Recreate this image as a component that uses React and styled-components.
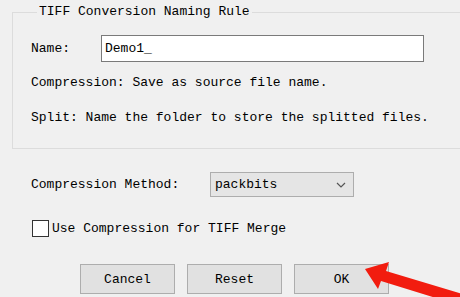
import React from 'react'
import styled, {createGlobalStyle} from 'styled-components'

const Global = createGlobalStyle`
  html, body {
    margin: 0;
    padding: 0;
    background: #f0f0f0;
  }
  body {
    width: 460px;
    height: 297px;
    overflow: hidden;
    font-family: "Liberation Mono", "DejaVu Sans Mono", monospace;
    font-size: 13px;
    color: #000;
  }
`

const Dialog = styled.div`
  position: relative;
  width: 460px;
  height: 297px;
  overflow: hidden;
`

const Group = styled.fieldset`
  margin: 4px 0 0 12px;
  width: 470px;
  padding: 15px 0 22px 18px;
  border: 1px solid #dcdcdc;
  box-sizing: border-box;
`

const Legend = styled.legend`
  margin-left: 6px;
  padding: 0 2px;
  line-height: 16px;
`

const Row = styled.div`
  display: flex;
  align-items: center;
  gap: ${(props) => props.gap || 0}px;
  margin-top: ${(props) => props.top || 0}px;
  padding-left: ${(props) => props.left || 0}px;
`

const Label = styled.span`
  width: ${(props) => props.width}px;
  flex: none;
  line-height: 16px;
`

const Note = styled.div`
  line-height: 16px;
  margin-top: ${(props) => props.top}px;
`

const TextInput = styled.input`
  width: 323px;
  height: 27px;
  box-sizing: border-box;
  border: 1px solid #7a7a7a;
  background: #fff;
  padding: 0 3px;
  font: inherit;
  color: #000;
  outline: none;
`

const Select = styled.div`
  width: 144px;
  height: 25px;
  box-sizing: border-box;
  border: 1px solid #adadad;
  background: #e5e5e5;
  display: flex;
  align-items: center;
  justify-content: space-between;
  padding: 0 7px 0 4px;
`

const Check = styled.span`
  width: 17px;
  height: 17px;
  box-sizing: border-box;
  border: 1px solid #333;
  background: #fff;
  flex: none;
`

const Buttons = styled.div`
  display: flex;
  gap: 12px;
  margin-top: 27px;
  padding-left: 80px;
`

const Button = styled.button`
  width: 95px;
  height: 30px;
  box-sizing: border-box;
  border: 1px solid #adadad;
  background: #e1e1e1;
  font: inherit;
  color: #000;
  padding: 0;
`

const Arrow = styled.svg`
  position: absolute;
  left: 0;
  top: 0;
  pointer-events: none;
`

function Chevron() {
  return (
    <svg width="10" height="6" viewBox="0 0 10 6">
      <polyline points="1,1 5,5 9,1" fill="none" stroke="#555" strokeWidth="1.2" />
    </svg>
  )
}

export default function App() {
  return (
    <Dialog>
      <Global />
      <Group>
        <Legend>TIFF Conversion Naming Rule</Legend>
        <Row>
          <Label width={70}>Name:</Label>
          <TextInput defaultValue="Demo1_" />
        </Row>
        <Note top={13}>Compression: Save as source file name.</Note>
        <Note top={19}>Split: Name the folder to store the splitted files.</Note>
      </Group>
      <Row top={23} left={31}>
        <Label width={179}>Compression Method:</Label>
        <Select>
          <span>packbits</span>
          <Chevron />
        </Select>
      </Row>
      <Row top={23} left={32} gap={3}>
        <Check />
        <Label>Use Compression for TIFF Merge</Label>
      </Row>
      <Buttons>
        <Button>Cancel</Button>
        <Button>Reset</Button>
        <Button>OK</Button>
      </Buttons>
      <Arrow width="460" height="297" viewBox="0 0 460 297">
        <polygon
          points="365,269 389,262 386,271 482,300 478,311 381,281 378,289"
          fill="#f21c0f"
        />
      </Arrow>
    </Dialog>
  )
}
